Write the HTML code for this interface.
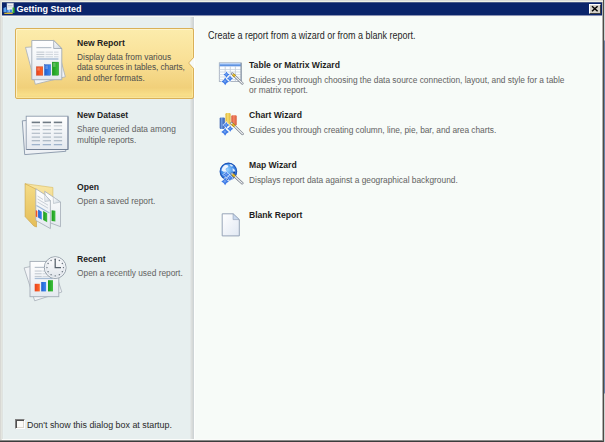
<!DOCTYPE html>
<html><head><meta charset="utf-8">
<style>
html,body{margin:0;padding:0;width:605px;height:442px;overflow:hidden;background:#d4d0c8;}
*{box-sizing:border-box;}
body{position:relative;font-family:"Liberation Sans",sans-serif;}
.abs{position:absolute;}
.r{position:absolute;}
#title{position:absolute;left:2px;top:2px;width:600px;height:13px;background:#0a246a;border-top:1px solid #4a5a88;}
#tt{position:absolute;left:14.6px;top:0px;color:#fff;font-weight:bold;font-size:9px;line-height:12px;letter-spacing:0px;white-space:nowrap;}
#close{position:absolute;left:589px;top:4px;width:12px;height:10px;background:#d4d0c8;
  border-top:1px solid #fff;border-left:1px solid #fff;border-right:1px solid #404040;border-bottom:1px solid #404040;}
#left{position:absolute;left:4px;top:17px;width:186px;height:422px;background:#e7efef;}
#sep{position:absolute;left:190px;top:17px;width:5px;height:422px;background:linear-gradient(to right,#e2e7e7 0,#e2e7e7 1px,#dcdfde 1px,#dcdfde 2px,#d6d9d8 2px,#d6d9d8 3px,#ced4d6 3px,#ced4d6 4px,#fdfefd 4px);}
#right{position:absolute;left:195px;top:17px;width:405px;height:422px;background:#f7fbf8;}
.ttl{position:absolute;font-weight:bold;font-size:8.6px;line-height:10px;color:#1e1e1e;white-space:nowrap;}
.dsc{position:absolute;font-size:8.36px;line-height:10.8px;color:#626262;white-space:nowrap;}
#box{position:absolute;left:15px;top:28px;width:179px;height:71px;border:1px solid #d9b058;border-radius:2px;box-shadow:inset 1px 1px 0 rgba(255,248,215,0.7), inset -1px -1px 0 rgba(255,240,170,0.5);
  background:linear-gradient(to bottom,#fcecac 0%,#f9e096 45%,#f1d07a 85%,#f8de88 95%,#f4d986 100%);}
</style></head>
<body>
<div class="r" style="left:0;top:0;width:604px;height:1px;background:#dcdcd8"></div>
<div class="r" style="left:0;top:0;width:1px;height:442px;background:#d8d8d4"></div>
<div class="r" style="left:1px;top:1px;width:602px;height:1px;background:#f0f2e6"></div>
<div class="r" style="left:1px;top:1px;width:1px;height:440px;background:#e3e5df"></div>
<div class="r" style="left:3px;top:17px;width:1px;height:422px;background:#e9f1f1"></div>
<div class="r" style="left:2px;top:15px;width:600px;height:1px;background:#8a93b4"></div>
<div class="r" style="left:2px;top:16px;width:600px;height:1px;background:#f8f8f4"></div>
<div class="r" style="left:2px;top:17px;width:1px;height:422px;background:#dfe3e1"></div>
<div class="r" style="left:600px;top:16px;width:2px;height:423px;background:#fdfefd"></div>
<div class="r" style="left:602px;top:2px;width:1px;height:439px;background:#b0b0ac"></div>
<div class="r" style="left:603px;top:0;width:1px;height:442px;background:#4f4b47"></div>
<div class="r" style="left:604px;top:0;width:1px;height:442px;background:linear-gradient(to bottom,#cdd2d6 0,#cdd2d6 40px,#6a82aa 41px,#6a82aa 393px,#cfd3d3 394px)"></div>
<div class="r" style="left:2px;top:439px;width:600px;height:1px;background:#fbfcfa"></div>
<div class="r" style="left:0;top:440px;width:603px;height:1px;background:#8a8a88"></div>
<div class="r" style="left:0;top:441px;width:603px;height:1px;background:#3c3c3c"></div>
<div id="title"><div id="tt">Getting Started</div></div>
<div id="close"></div>
<div id="left"></div>
<div id="sep"></div>
<div id="right"></div>
<div id="box"></div>

<!-- left items -->
<div class="ttl" style="left:77px;top:37.5px;">New Report</div>
<div class="dsc" style="left:77px;top:51.7px;color:#4c4c4c;">Display data from various<br><span style="letter-spacing:-0.1px">data sources in tables, charts,</span><br>and other formats.</div>

<div class="ttl" style="left:77px;top:109.9px;">New Dataset</div>
<div class="dsc" style="left:77px;top:123.5px;line-height:11px;">Share queried data among<br>multiple reports.</div>

<div class="ttl" style="left:77px;top:181.9px;">Open</div>
<div class="dsc" style="left:77px;top:195.7px;">Open a saved report.</div>

<div class="ttl" style="left:77px;top:254.2px;">Recent</div>
<div class="dsc" style="left:77px;top:267.7px;">Open a recently used report.</div>

<!-- right -->
<div class="abs" style="left:208px;top:30px;font-size:10px;line-height:12px;color:#262626;white-space:nowrap;transform-origin:0 0;transform:scaleX(0.897);">Create a report from a wizard or from a blank report.</div>

<div class="ttl" style="left:249px;top:59.6px;">Table or Matrix Wizard</div>
<div class="dsc" style="left:249px;top:74.6px;">Guides you through choosing the data source connection, layout, and style for a table<br>or matrix report.</div>

<div class="ttl" style="left:249px;top:109.6px;">Chart Wizard</div>
<div class="dsc" style="left:249px;top:124.6px;letter-spacing:-0.02px;">Guides you through creating column, line, pie, bar, and area charts.</div>

<div class="ttl" style="left:249px;top:159.6px;">Map Wizard</div>
<div class="dsc" style="left:249px;top:174.6px;">Displays report data against a geographical background.</div>

<div class="ttl" style="left:249px;top:209.6px;">Blank Report</div>

<!-- checkbox -->
<div class="abs" style="left:15px;top:419px;width:10px;height:10px;background:#fbfbf8;border-top:1px solid #808080;border-left:1px solid #808080;border-right:1px solid #fff;border-bottom:1px solid #fff;box-shadow:inset 1px 1px 0 #505050, inset -1px -1px 0 #dcd8d0;"></div>
<div class="abs" style="left:26.6px;top:418.8px;font-size:9.6px;line-height:12px;color:#2a2a2a;white-space:nowrap;transform-origin:0 0;transform:scaleX(0.926);">Don't show this dialog box at startup.</div>
<svg class="abs" style="left:0;top:0" width="605" height="442" viewBox="0 0 605 442"><defs>
<linearGradient id="pg" x1="0" y1="0" x2="0" y2="1"><stop offset="0" stop-color="#ffffff"/><stop offset="1" stop-color="#e4e9ef"/></linearGradient>
<linearGradient id="pg2" x1="0" y1="0" x2="1" y2="1"><stop offset="0" stop-color="#ffffff"/><stop offset="1" stop-color="#e1e8f3"/></linearGradient>
<linearGradient id="red" x1="0" y1="0" x2="1" y2="0"><stop offset="0" stop-color="#e8401a"/><stop offset="1" stop-color="#ff6a2a"/></linearGradient>
<linearGradient id="blu" x1="0" y1="0" x2="1" y2="0"><stop offset="0" stop-color="#1f5fd0"/><stop offset="1" stop-color="#3f8af0"/></linearGradient>
<linearGradient id="grn" x1="0" y1="0" x2="1" y2="0"><stop offset="0" stop-color="#1a9a1a"/><stop offset="1" stop-color="#40c040"/></linearGradient>
<linearGradient id="fold" x1="0" y1="0" x2="1" y2="1"><stop offset="0" stop-color="#ffffff"/><stop offset="1" stop-color="#c9d3de"/></linearGradient>
<linearGradient id="fy" x1="0" y1="0" x2="0" y2="1"><stop offset="0" stop-color="#f5dc86"/><stop offset="1" stop-color="#e4bd58"/></linearGradient>
<linearGradient id="fy2" x1="0" y1="0" x2="0" y2="1"><stop offset="0" stop-color="#f8e6a4"/><stop offset="1" stop-color="#efd27e"/></linearGradient>
<radialGradient id="globe" cx="0.45" cy="0.4" r="0.7"><stop offset="0" stop-color="#9ad4ff"/><stop offset="0.55" stop-color="#3f8ae6"/><stop offset="1" stop-color="#1f5cc8"/></radialGradient>
<linearGradient id="cb" x1="0" y1="0" x2="1" y2="0"><stop offset="0" stop-color="#2a52a8"/><stop offset="0.35" stop-color="#6f9ae0"/><stop offset="1" stop-color="#2f5ab0"/></linearGradient>
<linearGradient id="cy" x1="0" y1="0" x2="1" y2="0"><stop offset="0" stop-color="#dcb030"/><stop offset="0.45" stop-color="#f8de70"/><stop offset="1" stop-color="#dcb438"/></linearGradient>
<linearGradient id="cr" x1="0" y1="0" x2="1" y2="0"><stop offset="0" stop-color="#d45434"/><stop offset="0.45" stop-color="#f48464"/><stop offset="1" stop-color="#d85a3a"/></linearGradient>
<linearGradient id="clk" x1="0" y1="0" x2="0" y2="1"><stop offset="0" stop-color="#ffffff"/><stop offset="1" stop-color="#dfe4ea"/></linearGradient>
<linearGradient id="hdr" x1="0" y1="0" x2="0" y2="1"><stop offset="0" stop-color="#9cc0f4"/><stop offset="1" stop-color="#4a84dc"/></linearGradient>
</defs><polygon points="25.5,47.4 35.3,84.3 65.3,76.8 57,45" fill="#f2f4f7" stroke="#a7afb8" stroke-width="0.8"/><path d="M31.8,40.5 H53.7 L61.8,48.5 V79.7 H31.8 Z" fill="url(#pg)" stroke="#a3acb6" stroke-width="0.9"/><path d="M53.7,40.5 V48.5 H61.8 Z" fill="url(#fold)" stroke="#98a2ae" stroke-width="0.8"/><rect x="36.4" y="47" width="15" height="1.2" fill="#b9c2cc"/><rect x="36.4" y="51.6" width="8" height="1.1" fill="#c3cad2"/><rect x="45.5" y="51.6" width="7.5" height="1.1" fill="#d2d8de"/><rect x="54" y="51.6" width="4.5" height="1.1" fill="#d2d8de"/><rect x="36.4" y="53.9" width="8" height="1.1" fill="#c3cad2"/><rect x="45.5" y="53.9" width="7.5" height="1.1" fill="#d2d8de"/><rect x="54" y="53.9" width="4.5" height="1.1" fill="#d2d8de"/><rect x="36.4" y="56.2" width="8" height="1.1" fill="#c3cad2"/><rect x="45.5" y="56.2" width="7.5" height="1.1" fill="#d2d8de"/><rect x="54" y="56.2" width="4.5" height="1.1" fill="#d2d8de"/><rect x="36.4" y="58.3" width="22" height="1.4" fill="#a8bdd6"/><rect x="36.4" y="66.8" width="6.4" height="8.4" fill="url(#red)" stroke="#c83410" stroke-width="0.4"/><rect x="44.5" y="64.7" width="6.1" height="10.5" fill="url(#blu)" stroke="#1a50b8" stroke-width="0.4"/><rect x="52.2" y="62.1" width="6.5" height="13.1" fill="url(#grn)" stroke="#168a16" stroke-width="0.4"/><rect x="37.2" y="67.6" width="2.5" height="3" fill="#ffffff" opacity="0.25"/><rect x="45.3" y="65.5" width="2.5" height="3.5" fill="#ffffff" opacity="0.25"/><rect x="53" y="62.9" width="2.5" height="4" fill="#ffffff" opacity="0.25"/><polygon points="22.3,120.8 24.7,154.6 65.8,151.3 64,118" fill="#eef1f5" stroke="#8795a8" stroke-width="0.9"/><rect x="26.2" y="116.2" width="41.8" height="33.3" fill="url(#pg)" stroke="#8e9bad" stroke-width="0.9"/><path d="M26.6,149.5 H68 V116.6" fill="none" stroke="#6f7e94" stroke-width="0.9"/><rect x="31.7" y="121.6" width="8.3" height="1.6" fill="#6f7a84"/><rect x="42.7" y="121.6" width="8.3" height="1.6" fill="#6f7a84"/><rect x="53.8" y="121.6" width="8.3" height="1.6" fill="#6f7a84"/><rect x="31.7" y="125.3" width="8.3" height="1.1" fill="#c6ccd2"/><rect x="42.7" y="125.3" width="8.3" height="1.1" fill="#c6ccd2"/><rect x="53.8" y="125.3" width="8.3" height="1.1" fill="#c6ccd2"/><rect x="31.7" y="129.0" width="8.3" height="1.2" fill="#b6c0ca"/><rect x="42.7" y="129.0" width="8.3" height="1.2" fill="#b6c0ca"/><rect x="53.8" y="129.0" width="8.3" height="1.2" fill="#b6c0ca"/><rect x="31.7" y="132.7" width="8.3" height="1.2" fill="#b3bdc8"/><rect x="42.7" y="132.7" width="8.3" height="1.2" fill="#b3bdc8"/><rect x="53.8" y="132.7" width="8.3" height="1.2" fill="#b3bdc8"/><rect x="31.7" y="136.5" width="8.3" height="1.2" fill="#aeb9c5"/><rect x="42.7" y="136.5" width="8.3" height="1.2" fill="#aeb9c5"/><rect x="53.8" y="136.5" width="8.3" height="1.2" fill="#aeb9c5"/><rect x="31.7" y="140.1" width="8.3" height="1.2" fill="#a9b5c2"/><rect x="42.7" y="140.1" width="8.3" height="1.2" fill="#a9b5c2"/><rect x="53.8" y="140.1" width="8.3" height="1.2" fill="#a9b5c2"/><rect x="31.7" y="144.0" width="8.3" height="1.3" fill="#9fb3cc"/><rect x="42.7" y="144.0" width="8.3" height="1.3" fill="#9fb3cc"/><rect x="53.8" y="144.0" width="8.3" height="1.3" fill="#9fb3cc"/><polygon points="25.1,183.7 52.9,187.5 52.9,215 36.5,215" fill="url(#fy2)" stroke="#d8b85a" stroke-width="0.6"/><polygon points="25.1,183.7 36.5,189.4 36.5,227 33.9,226 25.1,216.6" fill="url(#fy)" stroke="#c9a040" stroke-width="0.6"/><path d="M44.7,191.3 L53.2,197 L60.5,202 L60.5,226.7 L48,222 Z" fill="url(#pg)" stroke="#a3acb6" stroke-width="0.8"/><path d="M53.2,197 L53.5,203.5 L60.5,202 Z" fill="url(#fold)" stroke="#a3acb6" stroke-width="0.5"/><rect x="51.6" y="210.3" width="3.8" height="10.7" fill="url(#grn)" transform="skewY(8) translate(0,-7.3)"/><path d="M35.8,188.8 L44.7,194.5 L50.4,200.8 L50.4,228.6 L35.8,220.4 Z" fill="url(#pg)" stroke="#a3acb6" stroke-width="0.8"/><path d="M44.7,194.5 L44.9,201.5 L50.4,200.8 Z" fill="url(#fold)" stroke="#a3acb6" stroke-width="0.5"/><path d="M37.5,196 L43,199.5 M37.5,199 L48,205.2 M37.5,202 L48,208.2" stroke="#c3cad2" stroke-width="0.9"/><path d="M36.5,205.5 L49.5,213" stroke="#9fb8d8" stroke-width="1.1"/><path d="M35.8,210 L37.4,211 L37.4,217.6 L35.8,216.6Z" fill="url(#red)"/><path d="M38.1,209.6 L41.8,211.8 L41.8,219.8 L38.1,217.6Z" fill="url(#blu)"/><path d="M43.2,210.9 L47.2,213.3 L47.2,222.3 L43.2,219.9Z" fill="url(#grn)"/><polygon points="24.1,267.9 34.7,300.8 61.8,292 52,262" fill="#f2f4f7" stroke="#a7afb8" stroke-width="0.8"/><rect x="30" y="261.4" width="28.8" height="35.3" fill="url(#pg)" stroke="#a3acb6" stroke-width="0.9"/><rect x="34.7" y="266.8" width="12.5" height="1.2" fill="#b9c2cc"/><rect x="34.7" y="270.5" width="7" height="1.1" fill="#c3cad2"/><rect x="42.5" y="270.5" width="7" height="1.1" fill="#d2d8de"/><rect x="34.7" y="273.2" width="7" height="1.1" fill="#c3cad2"/><rect x="42.5" y="273.2" width="7" height="1.1" fill="#d2d8de"/><rect x="34.7" y="275.9" width="7" height="1.1" fill="#c3cad2"/><rect x="42.5" y="275.9" width="7" height="1.1" fill="#d2d8de"/><rect x="34.7" y="277.8" width="18" height="1.3" fill="#a8bdd6"/><rect x="34.7" y="283.8" width="5.1" height="7.6" fill="url(#red)"/><rect x="41.2" y="282" width="4.9" height="9.4" fill="url(#blu)"/><rect x="48" y="280.2" width="5" height="11.2" fill="url(#grn)"/><circle cx="55.2" cy="267.6" r="10.9" fill="url(#clk)" stroke="#98a2ac" stroke-width="1.0"/><circle cx="55.2" cy="267.6" r="9.8" fill="none" stroke="#f4f6f8" stroke-width="0.9"/><circle cx="55.2" cy="267.6" r="9.0" fill="none" stroke="#c8d0d8" stroke-width="0.4"/><circle cx="55.20" cy="259.40" r="0.65" fill="#5a6570"/><circle cx="59.30" cy="260.50" r="0.65" fill="#5a6570"/><circle cx="62.30" cy="263.50" r="0.65" fill="#5a6570"/><circle cx="63.40" cy="267.60" r="0.65" fill="#5a6570"/><circle cx="62.30" cy="271.70" r="0.65" fill="#5a6570"/><circle cx="59.30" cy="274.70" r="0.65" fill="#5a6570"/><circle cx="55.20" cy="275.80" r="0.65" fill="#5a6570"/><circle cx="51.10" cy="274.70" r="0.65" fill="#5a6570"/><circle cx="48.10" cy="271.70" r="0.65" fill="#5a6570"/><circle cx="47.00" cy="267.60" r="0.65" fill="#5a6570"/><circle cx="48.10" cy="263.50" r="0.65" fill="#5a6570"/><circle cx="51.10" cy="260.50" r="0.65" fill="#5a6570"/><path d="M55.2,258.8 V267.6 H61.0" fill="none" stroke="#56606a" stroke-width="1.25"/><rect x="219.3" y="62.8" width="22" height="18.6" fill="#fbfdff" stroke="#9aa6b6" stroke-width="0.8"/><rect x="219.7" y="63.2" width="21.2" height="3.1" fill="url(#hdr)"/><line x1="220" y1="63.7" x2="240.6" y2="63.7" stroke="#cfe0fa" stroke-width="0.6"/><line x1="225.2" y1="66.3" x2="225.2" y2="81.2" stroke="#bcc8d6" stroke-width="0.8"/><line x1="230.3" y1="66.3" x2="230.3" y2="81.2" stroke="#bcc8d6" stroke-width="0.8"/><line x1="235.4" y1="66.3" x2="235.4" y2="81.2" stroke="#bcc8d6" stroke-width="0.8"/><line x1="219.3" y1="69.5" x2="241.3" y2="69.5" stroke="#c4d0dc" stroke-width="0.7"/><line x1="219.3" y1="72" x2="241.3" y2="72" stroke="#c4d0dc" stroke-width="0.7"/><line x1="219.3" y1="74.6" x2="241.3" y2="74.6" stroke="#c4d0dc" stroke-width="0.7"/><line x1="219.3" y1="77" x2="241.3" y2="77" stroke="#c4d0dc" stroke-width="0.7"/><line x1="219.3" y1="79.6" x2="241.3" y2="79.6" stroke="#c4d0dc" stroke-width="0.7"/><line x1="241" y1="63" x2="241" y2="81.4" stroke="#7e8a98" stroke-width="0.9"/><path d="M226.50,70.60 Q227.70,73.40 230.50,74.60 Q227.70,75.80 226.50,78.60 Q225.30,75.80 222.50,74.60 Q225.30,73.40 226.50,70.60Z" fill="#f4f8ff" opacity="0.85"/><path d="M226.50,71.40 Q227.33,73.77 229.70,74.60 Q227.33,75.43 226.50,77.80 Q225.67,75.43 223.30,74.60 Q225.67,73.77 226.50,71.40Z" fill="#3d7ae6"/><path d="M226.30,73.12 Q226.81,73.89 227.58,74.40 Q226.81,74.91 226.30,75.68 Q225.79,74.91 225.02,74.40 Q225.79,73.89 226.30,73.12Z" fill="#a8c8fa" opacity="0.5"/><path d="M230.00,74.60 Q231.14,77.26 233.80,78.40 Q231.14,79.54 230.00,82.20 Q228.86,79.54 226.20,78.40 Q228.86,77.26 230.00,74.60Z" fill="#f4f8ff" opacity="0.85"/><path d="M230.00,75.40 Q230.78,77.62 233.00,78.40 Q230.78,79.18 230.00,81.40 Q229.22,79.18 227.00,78.40 Q229.22,77.62 230.00,75.40Z" fill="#3d7ae6"/><path d="M229.80,77.00 Q230.28,77.72 231.00,78.20 Q230.28,78.68 229.80,79.40 Q229.32,78.68 228.60,78.20 Q229.32,77.72 229.80,77.00Z" fill="#a8c8fa" opacity="0.5"/><path d="M225.20,76.80 Q226.58,80.02 229.80,81.40 Q226.58,82.78 225.20,86.00 Q223.82,82.78 220.60,81.40 Q223.82,80.02 225.20,76.80Z" fill="#f4f8ff" opacity="0.85"/><path d="M225.20,77.60 Q226.19,80.41 229.00,81.40 Q226.19,82.39 225.20,85.20 Q224.21,82.39 221.40,81.40 Q224.21,80.41 225.20,77.60Z" fill="#3d7ae6"/><path d="M225.00,79.68 Q225.61,80.59 226.52,81.20 Q225.61,81.81 225.00,82.72 Q224.39,81.81 223.48,81.20 Q224.39,80.59 225.00,79.68Z" fill="#a8c8fa" opacity="0.5"/><line x1="232.20" y1="73.60" x2="242.30" y2="83.30" stroke="#6f7682" stroke-width="2.5" stroke-linecap="round"/><line x1="232.20" y1="73.60" x2="242.30" y2="83.30" stroke="#eef0f3" stroke-width="1.2" stroke-linecap="round"/><line x1="233.01" y1="74.38" x2="235.03" y2="76.32" stroke="#a8820c" stroke-width="2.7"/><line x1="233.01" y1="74.38" x2="235.03" y2="76.32" stroke="#e6c036" stroke-width="1.5"/><rect x="219.7" y="117.4" width="5.1" height="11.6" rx="1.2" fill="url(#cb)"/><rect x="225.5" y="113" width="5.1" height="13" rx="1.2" fill="url(#cy)"/><rect x="231.3" y="115.2" width="5.4" height="10.2" rx="1.2" fill="url(#cr)"/><path d="M226.30,121.10 Q227.50,123.90 230.30,125.10 Q227.50,126.30 226.30,129.10 Q225.10,126.30 222.30,125.10 Q225.10,123.90 226.30,121.10Z" fill="#f4f8ff" opacity="0.85"/><path d="M226.30,121.90 Q227.13,124.27 229.50,125.10 Q227.13,125.93 226.30,128.30 Q225.47,125.93 223.10,125.10 Q225.47,124.27 226.30,121.90Z" fill="#3d7ae6"/><path d="M226.10,123.62 Q226.61,124.39 227.38,124.90 Q226.61,125.41 226.10,126.18 Q225.59,125.41 224.82,124.90 Q225.59,124.39 226.10,123.62Z" fill="#a8c8fa" opacity="0.5"/><path d="M230.20,125.00 Q231.34,127.66 234.00,128.80 Q231.34,129.94 230.20,132.60 Q229.06,129.94 226.40,128.80 Q229.06,127.66 230.20,125.00Z" fill="#f4f8ff" opacity="0.85"/><path d="M230.20,125.80 Q230.98,128.02 233.20,128.80 Q230.98,129.58 230.20,131.80 Q229.42,129.58 227.20,128.80 Q229.42,128.02 230.20,125.80Z" fill="#3d7ae6"/><path d="M230.00,127.40 Q230.48,128.12 231.20,128.60 Q230.48,129.08 230.00,129.80 Q229.52,129.08 228.80,128.60 Q229.52,128.12 230.00,127.40Z" fill="#a8c8fa" opacity="0.5"/><path d="M225.10,127.30 Q226.48,130.52 229.70,131.90 Q226.48,133.28 225.10,136.50 Q223.72,133.28 220.50,131.90 Q223.72,130.52 225.10,127.30Z" fill="#f4f8ff" opacity="0.85"/><path d="M225.10,128.10 Q226.09,130.91 228.90,131.90 Q226.09,132.89 225.10,135.70 Q224.11,132.89 221.30,131.90 Q224.11,130.91 225.10,128.10Z" fill="#3d7ae6"/><path d="M224.90,130.18 Q225.51,131.09 226.42,131.70 Q225.51,132.31 224.90,133.22 Q224.29,132.31 223.38,131.70 Q224.29,131.09 224.90,130.18Z" fill="#a8c8fa" opacity="0.5"/><line x1="231.50" y1="123.20" x2="242.50" y2="133.80" stroke="#6f7682" stroke-width="2.5" stroke-linecap="round"/><line x1="231.50" y1="123.20" x2="242.50" y2="133.80" stroke="#eef0f3" stroke-width="1.2" stroke-linecap="round"/><line x1="232.38" y1="124.05" x2="234.58" y2="126.17" stroke="#a8820c" stroke-width="2.7"/><line x1="232.38" y1="124.05" x2="234.58" y2="126.17" stroke="#e6c036" stroke-width="1.5"/><circle cx="228.4" cy="171.4" r="8.3" fill="url(#globe)" stroke="#1f55b8" stroke-width="1.1"/><path d="M221.5,170.5 q0.5,-4 3.5,-5.5 q2.5,-0.5 3.5,1 q-0.5,2 -2.5,2.2 q-1,1.2 0.2,2.6 q-1.5,1.6 -3,0.6 z" fill="#f4f8ff" opacity="0.95"/><path d="M229.5,164.2 q2.5,-0.3 3.6,1.5 q-1,1.3 -2.4,0.6 z M232.5,168 q2.2,0.8 2.8,3.2 q-1.6,1.2 -2.6,-0.2 z" fill="#eaf3ff" opacity="0.9"/><circle cx="234.2" cy="172.5" r="1.0" fill="#1a3a88"/><path d="M226.20,170.60 Q227.40,173.40 230.20,174.60 Q227.40,175.80 226.20,178.60 Q225.00,175.80 222.20,174.60 Q225.00,173.40 226.20,170.60Z" fill="#f4f8ff" opacity="0.85"/><path d="M226.20,171.40 Q227.03,173.77 229.40,174.60 Q227.03,175.43 226.20,177.80 Q225.37,175.43 223.00,174.60 Q225.37,173.77 226.20,171.40Z" fill="#3d7ae6"/><path d="M226.00,173.12 Q226.51,173.89 227.28,174.40 Q226.51,174.91 226.00,175.68 Q225.49,174.91 224.72,174.40 Q225.49,173.89 226.00,173.12Z" fill="#a8c8fa" opacity="0.5"/><path d="M229.90,174.10 Q231.04,176.76 233.70,177.90 Q231.04,179.04 229.90,181.70 Q228.76,179.04 226.10,177.90 Q228.76,176.76 229.90,174.10Z" fill="#f4f8ff" opacity="0.85"/><path d="M229.90,174.90 Q230.68,177.12 232.90,177.90 Q230.68,178.68 229.90,180.90 Q229.12,178.68 226.90,177.90 Q229.12,177.12 229.90,174.90Z" fill="#3d7ae6"/><path d="M229.70,176.50 Q230.18,177.22 230.90,177.70 Q230.18,178.18 229.70,178.90 Q229.22,178.18 228.50,177.70 Q229.22,177.22 229.70,176.50Z" fill="#a8c8fa" opacity="0.5"/><path d="M225.10,176.80 Q226.48,180.02 229.70,181.40 Q226.48,182.78 225.10,186.00 Q223.72,182.78 220.50,181.40 Q223.72,180.02 225.10,176.80Z" fill="#f4f8ff" opacity="0.85"/><path d="M225.10,177.60 Q226.09,180.41 228.90,181.40 Q226.09,182.39 225.10,185.20 Q224.11,182.39 221.30,181.40 Q224.11,180.41 225.10,177.60Z" fill="#3d7ae6"/><path d="M224.90,179.68 Q225.51,180.59 226.42,181.20 Q225.51,181.81 224.90,182.72 Q224.29,181.81 223.38,181.20 Q224.29,180.59 224.90,179.68Z" fill="#a8c8fa" opacity="0.5"/><line x1="231.80" y1="173.80" x2="242.30" y2="183.20" stroke="#6f7682" stroke-width="2.5" stroke-linecap="round"/><line x1="231.80" y1="173.80" x2="242.30" y2="183.20" stroke="#eef0f3" stroke-width="1.2" stroke-linecap="round"/><line x1="232.64" y1="174.55" x2="234.74" y2="176.43" stroke="#a8820c" stroke-width="2.7"/><line x1="232.64" y1="174.55" x2="234.74" y2="176.43" stroke="#e6c036" stroke-width="1.5"/><path d="M222.2,213.8 H233.1 L239.3,219.6 V235.9 H222.2 Z" fill="url(#pg2)" stroke="#8c9bb0" stroke-width="0.9"/><path d="M233.1,213.8 V219.6 H239.3 Z" fill="#c8d8ee" stroke="#8c9bb0" stroke-width="0.6"/><rect x="7" y="3.2" width="6.5" height="9" fill="#eef0f4" stroke="#b8c0cc" stroke-width="0.5"/><rect x="8" y="5" width="4.5" height="0.7" fill="#b0b8c4"/><rect x="8" y="6.6" width="4.5" height="0.7" fill="#c0c8d0"/><path d="M3.5,8 L6,7 L6.5,12.3 L3.5,12.3Z" fill="#5aa0ec"/><rect x="6.5" y="9.8" width="2.2" height="2.5" fill="#3a88e6"/><rect x="9.5" y="9.5" width="2.4" height="2.8" fill="#3a80e0"/><rect x="12.5" y="7.5" width="2" height="5.5" fill="#30b030"/><rect x="4.3" y="12.8" width="8.4" height="1.1" fill="#f0c828"/><path d="M194,57.5 L188.5,63 L194,68.5 Z" fill="#f7faf8"/><path d="M193.6,57.3 L188.6,63 L193.6,68.7" fill="none" stroke="#dcb560" stroke-width="1"/><path d="M592,6.3 L597.6,11.2 M597.6,6.3 L592,11.2" stroke="#000" stroke-width="1.5"/></svg>
</body></html>
